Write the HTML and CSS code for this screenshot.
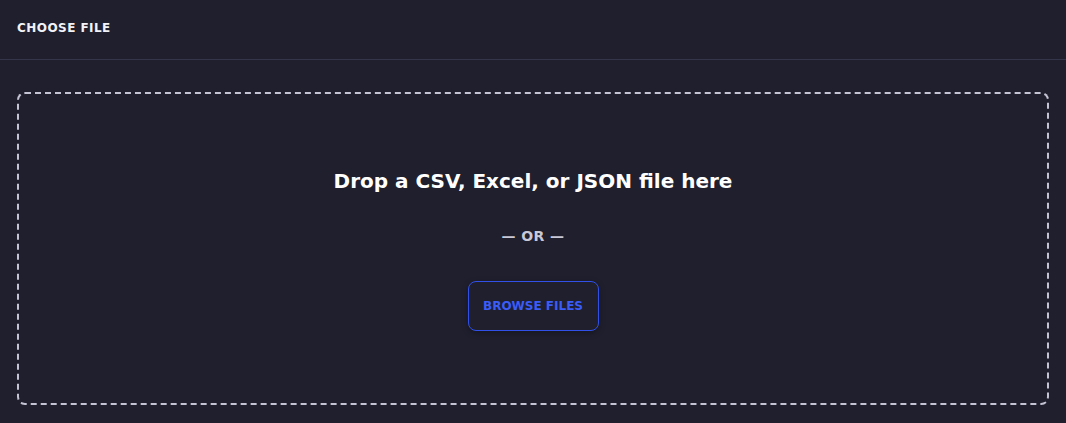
FILE: index.html
```html
<!DOCTYPE html>
<html>
<head>
<meta charset="utf-8">
<link rel="stylesheet" href="styles.css">
</head>
<body>
<div class="page">
  <header class="header">
    <span class="header-title">CHOOSE FILE</span>
  </header>
  <main class="content">
    <div class="dropzone">
      <div class="drop-title">Drop a CSV, Excel, or JSON file here</div>
      <div class="drop-or">— OR —</div>
      <button class="browse-btn">BROWSE FILES</button>
    </div>
  </main>
</div>
</body>
</html>
```

FILE: styles.css
```css
html, body {
  margin: 0;
  padding: 0;
  background: #1f1f2e;
  height: 100%;
}
body {
  font-family: "DejaVu Sans", "Open Sans", sans-serif;
  color: #ffffff;
}
.page {
  display: flex;
  flex-direction: column;
  height: 423px;
}
.header {
  height: 59px;
  border-bottom: 1px solid #34344a;
  display: flex;
  align-items: center;
  padding: 0 17px;
}
.header-title {
  font-size: 12px;
  font-weight: 700;
  letter-spacing: 0.45px;
  color: #f2f2f8;
  margin-top: -4px;
}
.content {
  flex: 1;
  padding: 32px 17px 18px 17px;
  display: flex;
}
.dropzone {
  flex: 1;
  border: 2px dashed #c4c4d4;
  border-radius: 8px;
  display: flex;
  flex-direction: column;
  align-items: center;
  justify-content: center;
}
.drop-title {
  font-size: 20px;
  font-weight: 700;
  line-height: 24px;
  color: #ffffff;
  margin-top: 2px;
}
.drop-or {
  margin-top: 33px;
  font-size: 14px;
  font-weight: 700;
  letter-spacing: 0.4px;
  line-height: 20px;
  color: #c8c8d6;
}
.browse-btn {
  margin-top: 35px;
  width: 131px;
  height: 50px;
  background: transparent;
  border: 1px solid #3050e8;
  border-radius: 8px;
  color: #3a5cf8;
  font-family: inherit;
  font-size: 12px;
  font-weight: 700;
  cursor: pointer;
  box-shadow: 0 2px 6px rgba(0,0,0,0.3);
}
```
